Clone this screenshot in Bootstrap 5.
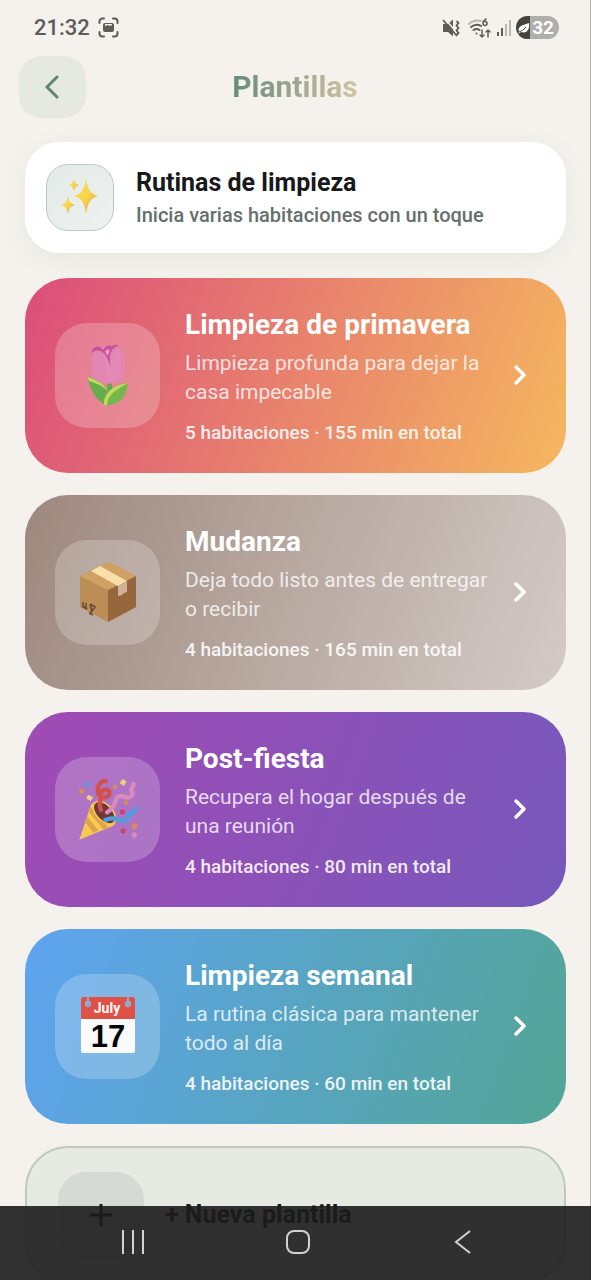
<!DOCTYPE html>
<html lang="es">
<head>
<meta charset="utf-8">
<meta name="viewport" content="width=device-width, initial-scale=1">
<title>Plantillas</title>
<link href="https://cdn.jsdelivr.net/npm/bootstrap@5.3.0/dist/css/bootstrap.min.css" rel="stylesheet">
<style>
  :root { --sage: #5f8575; --ink: #17191a; --paper: #f5f2ed; }
  body { font-family: Roboto, "Noto Sans", sans-serif; font-variant-ligatures: none; background: var(--paper); color: var(--ink); }
  .app-shell { border-right: 1px solid #b5b3b0; overflow: hidden; }
  .status-bar { height: 56px; padding: 0 31px 0 34px; color: #5f5b57; }
  .clock { font-size: 22px; font-weight: 500; line-height: 28px; }
  .battery { width: 43px; height: 23px; border-radius: 12px; background: linear-gradient(90deg, #45423f 32%, #b0aeab 32%); color: #fff; font-size: 19px; font-weight: 700; line-height: 23px; padding-right: 5px; }
  .top-bar { display: grid; grid-template-columns: 67px 1fr 67px; padding: 0 19px; }
  .back-btn { height: 62px; border-radius: 22px; background: #e6e8e2; color: var(--sage); }
  .page-title { font-size: 30px; line-height: 36px; font-weight: 700; }
  .page-title span { background: linear-gradient(90deg, #668b7b, #d3c3a4); -webkit-background-clip: text; background-clip: text; color: transparent; }
  .screen-list { padding: 24px 24px 0 25px; overflow-y: auto; scrollbar-width: none; }
  .screen-list::-webkit-scrollbar { display: none; }
  .routine-card { display: flex; align-items: center; gap: 22px; padding: 22px 21px; margin-bottom: 25px; border-radius: 34px; background: #fff; box-shadow: 0 6px 24px rgba(95,133,117,.1); color: var(--ink); text-decoration: none; }
  .routine-tile { width: 68px; height: 67px; border-radius: 22px; border: 1px solid #bccac6; background: linear-gradient(135deg, #e2eae7, #eef2f0); }
  .routine-title { font-size: 25px; line-height: 36px; font-weight: 700; }
  .routine-sub { font-size: 20px; line-height: 28px; font-weight: 500; color: #66706b; }
  .template-list { display: flex; flex-direction: column; gap: 22px; }
  .template-card { display: flex; align-items: center; gap: 16px; width: 100%; min-height: 195px; padding: 28px 39px 28px 30px; border: 0; border-radius: 43px; color: #fff; text-align: left; }
  .tile { width: 105px; height: 105px; margin-right: 9px; border-radius: 32px; background: rgba(255,255,255,.22); }
  .template-title { font-size: 28px; line-height: 37px; font-weight: 700; margin-bottom: 6px; }
  .template-desc { font-size: 21px; line-height: 29px; color: rgba(255,255,255,.8); margin-bottom: 14px; }
  .template-meta { font-size: 19px; line-height: 24px; font-weight: 500; color: rgba(255,255,255,.9); }
  .spring { background: linear-gradient(110deg, #db4d7b, #f5b85f); }
  .moving { background: linear-gradient(110deg, #9d887d, #d4cbc7); }
  .party { background: linear-gradient(110deg, #a04bb4, #7758bc); }
  .weekly { background: linear-gradient(110deg, #5ea4f0, #52a595); }
  .calendar-day { font-family: "Liberation Sans", Arial, sans-serif; }
  .new-card { display: flex; align-items: center; gap: 21px; width: 100%; padding: 24px 31px; border: 2px solid #bdc9c0; border-radius: 43px; background: #e7eae3; color: var(--ink); font-size: 25px; font-weight: 700; }
  .new-tile { width: 86px; height: 86px; border-radius: 28px; background: #d5dbd4; }
  .system-nav { height: 74px; padding: 0 46px 2px 50px; background: rgba(28,28,28,.9); }
  .system-nav button { color: #d2d2d2; }
  svg { display: block; flex: none; }
</style>
</head>
<body>
<div class="app-shell vh-100 d-flex flex-column">
  <div class="status-bar d-flex align-items-center justify-content-between">
    <div class="d-flex align-items-center gap-2">
      <span class="clock">21:32</span>
      <svg width="21" height="21" viewBox="0 0 21 21" fill="none" stroke="currentColor" stroke-width="2" stroke-linecap="round"><path d="M1.500 6V4.500a3 3 0 0 1 3-3H6M15 1.500h1.500a3 3 0 0 1 3 3V6M19.500 15v1.500a3 3 0 0 1-3 3H15M6 19.500H4.500a3 3 0 0 1-3-3V15"/><path d="M7 6h7q2 0 2 2v5q0 2-2 2H7q-2 0-2-2V8q0-2 2-2Zm0 3 3-1 2 1 2-1v-1H7Z" fill="currentColor" fill-rule="evenodd" stroke="none"/></svg>
    </div>
    <div class="d-flex align-items-center gap-1">
      <svg width="22" height="20" viewBox="0 0 22 20" fill="none" stroke="currentColor" stroke-width="1.800"><path d="M2 6h5l5-4.500v17L7 14H2z" fill="currentColor" stroke="none"/><path d="M4 1l14 16" stroke="#f5f2ed" stroke-width="1.500"/><path d="M2 2l14 16M15.500 3l2 2-2 2.500 2 2.500-2 2.500 2 2.500-2 2"/></svg>
      <svg width="25" height="22" viewBox="0 0 25 22" fill="none" stroke="currentColor" stroke-width="2" stroke-linecap="round"><path d="M2 7Q7 2 14 4" opacity=".4"/><path d="M4 10q5-4 10-1M6.500 13q3-2 6 0"/><circle cx="9.500" cy="16.500" r="1" fill="currentColor" stroke="none"/><path d="M19 2q-3 2-3 4.500a2 2 0 1 0 2-2" stroke-width="1.600"/><path d="M15 13v7m-2-2 2 2 2-2M21 20v-7m-2 2 2-2 2 2" stroke-width="1.500"/></svg>
      <svg width="16" height="18" viewBox="0 0 16 18" fill="none" stroke="currentColor" stroke-width="2"><path d="M2 13v4M6 9v8"/><path d="M10 5v12M14 1v16" opacity=".4"/></svg>
      <div class="battery d-flex align-items-center justify-content-between"><svg width="15" height="16" viewBox="0 0 15 16"><path d="M3 12C1 6 7 5 13 3c1 6-2 11-8 9l-3 2z" fill="#fff"/><path d="M3 12Q7 11 10 7" stroke="#45423f" fill="none"/></svg>32</div>
    </div>
  </div>

  <header class="top-bar align-items-center">
    <button type="button" class="back-btn btn border-0 p-0 d-flex align-items-center justify-content-center" aria-label="Volver">
      <svg width="16" height="24" viewBox="0 0 16 24" fill="none" stroke="currentColor" stroke-width="3" stroke-linecap="round" stroke-linejoin="round"><path d="M12 2 2 12l10 10"/></svg>
    </button>
    <h1 class="page-title text-center mb-0"><span>Plantillas</span></h1>
  </header>

  <main class="screen-list flex-fill">
    <a href="#rutinas" class="routine-card">
      <span class="routine-tile d-flex align-items-center justify-content-center flex-shrink-0">
        <svg width="40" height="38" viewBox="0 0 40 38">
          <defs><linearGradient id="gold" x1="0" y1="0" x2="1" y2="1"><stop offset=".5" stop-color="#f7d650"/><stop offset="1" stop-color="#dd9a3c"/></linearGradient></defs>
          <g fill="url(#gold)"><path d="M26 1q2 15 12 17-10 2-12 18-2-16-12-18Q24 16 26 1Z"/><path d="M8 18q1 8 7 9-6 1-7 9-1-8-7-9 6-1 7-9Z"/><path d="M14 1q1 5 5 6-4 1-5 6-1-5-5-6 4-1 5-6Z"/></g>
        </svg>
      </span>
      <span><span class="routine-title d-block">Rutinas de limpieza</span><span class="routine-sub d-block">Inicia varias habitaciones con un toque</span></span>
    </a>

    <div class="template-list">
      <button type="button" class="template-card spring">
        <span class="tile d-flex align-items-center justify-content-center flex-shrink-0">
          <svg width="60" height="64" viewBox="113 100 180 192"><path d="M201 212h14v50h-14z" fill="#62a64a"/><path d="M160 122C149 160 153 202 175 217q30 10 61 0c20-18 21-62 10-95q-20-14-46-14-26 2-40 14Z" fill="#e287b4"/><path d="M188 124q16 14 22 46 1-28 28-54 12 50-8 100h-28Z" fill="#e58db7" opacity=".6"/><path d="M152 130q7-24 27-18l10 8q10-18 25-10 11-7 22-3-12 4-20 13-12 18-5 53-11-38-27-47-14-8-32 4Z" fill="#c9539b"/><path d="m194 126 7-8 7 6-6 14Z" fill="#eaa0c6"/><path d="M141 202q48 12 65 47l9 18q-6 16-24 16-36-20-50-81Z" fill="#66ab4c"/><path d="M141 202q48 12 65 47-16-22-59-34Z" fill="#bfdb5d"/><path d="M263 221c-6 50-34 67-71 66-6-32 25-62 71-66Z" fill="#78b64e"/><path d="M263 221c-46 4-77 34-71 66h8c1-31 27-47 63-66Z" fill="#bfdb5d"/></svg>
        </span>
        <span class="flex-fill"><span class="template-title d-block">Limpieza de primavera</span><span class="template-desc d-block">Limpieza profunda para dejar la casa impecable</span><span class="template-meta d-block">5 habitaciones · 155 min en total</span></span>
        <svg width="14" height="22" viewBox="0 0 14 22" fill="none" stroke="currentColor" stroke-width="3.500" stroke-linecap="round" stroke-linejoin="round"><path d="m3 3 8 8-8 8"/></svg>
      </button>

      <button type="button" class="template-card moving">
        <span class="tile d-flex align-items-center justify-content-center flex-shrink-0">
          <svg width="58" height="62" viewBox="0 0 58 62"><path d="M1 15 29 1l28 14v31L29 61 1 46Z" fill="#bc8d57"/><path d="M57 15 29 29v32l28-15Z" fill="#96663c"/><path d="M1 15 29 1l28 14-28 14Z" fill="#d0a165"/><path d="m12 10 9-5 27 15-9 5Z" fill="#fae0a8"/><path d="m39 25 9-5v11l-3 1-2 2-4 1Z" fill="#cdb296"/><path d="M4 41v5m3-4v5m-4-2 5 3m3-5 5 3-3 4-2-6m1 6v3m-2-1 4 2" fill="none" stroke="#65472b" stroke-width="1.500"/></svg>
        </span>
        <span class="flex-fill"><span class="template-title d-block">Mudanza</span><span class="template-desc d-block">Deja todo listo antes de entregar o recibir</span><span class="template-meta d-block">4 habitaciones · 165 min en total</span></span>
        <svg width="14" height="22" viewBox="0 0 14 22" fill="none" stroke="currentColor" stroke-width="3.500" stroke-linecap="round" stroke-linejoin="round"><path d="m3 3 8 8-8 8"/></svg>
      </button>

      <button type="button" class="template-card party">
        <span class="tile d-flex align-items-center justify-content-center flex-shrink-0">
          <svg width="62" height="64" viewBox="110 96 186 192" fill="none"><path d="m117 284 34-102q8-16 26-8l46 54q4 10-6 15Z" fill="#f6ca55"/><path d="m140 214 34 42-14 8-26-32Zm10-30 54 64-14 6-46-55Z" fill="#dea445"/><ellipse cx="192" cy="203" rx="24" ry="41" transform="rotate(-44 192 203)" fill="#6c3a37" stroke="#f6ca55" stroke-width="5"/><g stroke-width="13" stroke-linecap="round"><path d="M182 195q-7-16-1-32M196 108c-30 0-31 47-8 50 26 1 24-28 7-24-11 2-13 9-13 13" stroke="#d3504d"/><path d="M200 202q18-11 24-30c8-24 16-20 26-17 24 8 31-7 23-18-2-11 6-9 7-20" stroke="#dc8abb"/><path d="M195 225q20-9 39-1c26 9 34-2 30-18 12-1 19-5 24-14" stroke="#519de0"/></g><g fill="#d88c54"><circle cx="124" cy="139" r="8"/><circle cx="224" cy="126" r="7"/><circle cx="258" cy="173" r="7"/><circle cx="282" cy="244" r="9"/></g><path d="m143 149 16 7-8 12-13-7Zm103-47 13 7-8 14-13-8Z" fill="#ecd07a"/><circle cx="140" cy="118" r="8" fill="#6298df"/><circle cx="248" cy="258" r="8" fill="#c8456d"/><circle cx="246" cy="201" r="8" fill="#c8456d"/><circle cx="282" cy="270" r="8" fill="#dc8abb"/></svg>
        </span>
        <span class="flex-fill"><span class="template-title d-block">Post-fiesta</span><span class="template-desc d-block">Recupera el hogar después de una reunión</span><span class="template-meta d-block">4 habitaciones · 80 min en total</span></span>
        <svg width="14" height="22" viewBox="0 0 14 22" fill="none" stroke="currentColor" stroke-width="3.500" stroke-linecap="round" stroke-linejoin="round"><path d="m3 3 8 8-8 8"/></svg>
      </button>

      <button type="button" class="template-card weekly">
        <span class="tile d-flex align-items-center justify-content-center flex-shrink-0">
          <svg width="56" height="60" viewBox="0 2 56 60"><rect x="1" y="3" width="54" height="56" rx="2" fill="#fafafa"/><path d="M1 25V5q0-2 2-2h50q2 0 2 2v20Z" fill="#df5144"/><g fill="#91a9cf"><circle cx="8" cy="10" r="3.300"/><circle cx="48" cy="10" r="3.300"/><path d="M7 2h2v8H7zm40 0h2v8h-2z"/></g><text x="27" y="19" text-anchor="middle" font-size="14" font-weight="700" fill="#fff">July</text><text class="calendar-day" x="28" y="53" text-anchor="middle" font-size="31" font-weight="700" fill="#050505">17</text></svg>
        </span>
        <span class="flex-fill"><span class="template-title d-block">Limpieza semanal</span><span class="template-desc d-block">La rutina clásica para mantener todo al día</span><span class="template-meta d-block">4 habitaciones · 60 min en total</span></span>
        <svg width="14" height="22" viewBox="0 0 14 22" fill="none" stroke="currentColor" stroke-width="3.500" stroke-linecap="round" stroke-linejoin="round"><path d="m3 3 8 8-8 8"/></svg>
      </button>

      <button type="button" class="new-card">
        <span class="new-tile d-flex align-items-center justify-content-center flex-shrink-0"><svg width="24" height="24" viewBox="0 0 24 24" fill="none" stroke="currentColor" stroke-width="3"><path d="M12 1v22M1 12h22"/></svg></span>
        <span>+ Nueva plantilla</span>
      </button>
    </div>
  </main>
</div>

<nav class="system-nav fixed-bottom d-flex" aria-label="Sistema">
  <button type="button" class="btn border-0 p-0 flex-fill d-flex align-items-center justify-content-center" aria-label="Recientes"><svg width="24" height="24" viewBox="0 0 24 24" fill="none" stroke="currentColor" stroke-width="2"><path d="M2 0v24M12 0v24M22 0v24"/></svg></button>
  <button type="button" class="btn border-0 p-0 flex-fill d-flex align-items-center justify-content-center" aria-label="Inicio"><svg width="24" height="24" viewBox="0 0 24 24" fill="none" stroke="currentColor" stroke-width="2"><rect x="1" y="1" width="22" height="22" rx="7"/></svg></button>
  <button type="button" class="btn border-0 p-0 flex-fill d-flex align-items-center justify-content-center" aria-label="Atrás"><svg width="24" height="24" viewBox="0 0 24 24" fill="none" stroke="currentColor" stroke-width="2"><path d="M19 1 5 12l14 11"/></svg></button>
</nav>
<script src="https://cdn.jsdelivr.net/npm/bootstrap@5.3.0/dist/js/bootstrap.bundle.min.js"></script>
</body>
</html>
